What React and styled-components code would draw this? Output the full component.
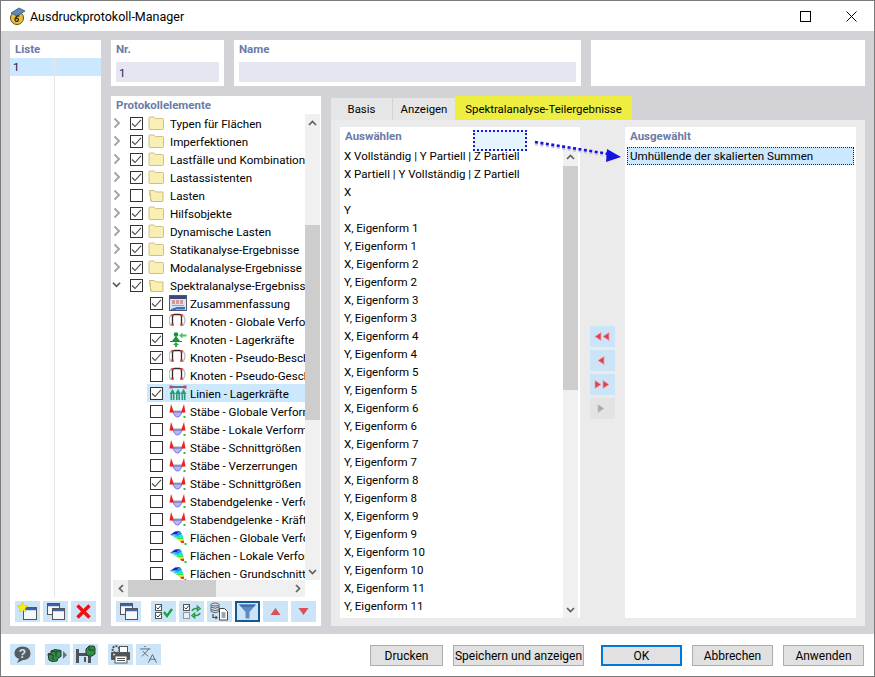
import React from "react";
import styled, { createGlobalStyle } from "styled-components";
import { Languages } from "lucide-react";

const Global = createGlobalStyle`
  html, body { margin: 0; padding: 0; background: #fff; }
  body { font-family: "Roboto", "Noto Sans", sans-serif; font-size: 11.6px; color: #000; }
  * { box-sizing: border-box; }
`;

const Window = styled.div`
  position: relative;
  width: 875px;
  height: 677px;
  border: 1px solid #7a7a7a;
  background: #fff;
  display: flex;
  flex-direction: column;
  overflow: hidden;
`;
const TitleBar = styled.div`
  height: 30px;
  display: flex;
  align-items: center;
  padding: 0 0 0 8px;
  flex: none;
`;
const TitleText = styled.div`
  flex: 1;
  margin-left: 4px;
  font-size: 12.5px;
`;
const WinBtn = styled.div`
  width: 46px;
  height: 30px;
  display: flex;
  align-items: center;
  justify-content: center;
`;
const Main = styled.div`
  flex: 1;
  min-height: 0;
  background: #d2d2d7;
  padding: 9px 9px 8px 9px;
  display: flex;
  gap: 10px;
`;
const Panel = styled.div`
  background: #fff;
  display: flex;
  flex-direction: column;
`;
const ListPanel = styled(Panel)`
  width: 91px;
  flex: none;
`;
const Heading = styled.div`
  height: ${p => p.$h || 18}px;
  line-height: 18px;
  padding-left: ${p => p.$pad ?? 5}px;
  color: #6b7ba6;
  font-weight: 700;
  font-size: 11.5px;
  flex: none;
`;
const ListColumns = styled.div`
  flex: 1;
  display: flex;
  min-height: 0;
`;
const ListColumn = styled.div`
  width: ${p => p.$w}px;
  border-right: ${p => (p.$rule ? "1px solid #e6e6e6" : "none")};
  flex: ${p => (p.$rule ? "none" : "1")};
`;
const ListCell = styled.div`
  height: 18px;
  line-height: 18px;
  background: #cce8ff;
  padding-left: 3px;
  color: #1d0f4a;
`;
const ToolRow = styled.div`
  height: 29px;
  flex: none;
  padding: 4px 5px;
  display: flex;
  gap: ${p => p.$gap ?? 3}px;
`;
const ToolGroup = styled.div`
  display: flex;
  gap: 3px;
`;
const ToolBtn = styled.div`
  width: 25px;
  height: 21px;
  flex: none;
  background: ${p => (p.$off ? "#e3e3e3" : "#cce4f7")};
  border: ${p => (p.$active ? "2px solid #15598f" : "none")};
  display: flex;
  align-items: center;
  justify-content: center;
`;
const RightCol = styled.div`
  flex: 1;
  min-width: 0;
  display: flex;
  flex-direction: column;
  gap: 10px;
`;
const TopRow = styled.div`
  display: flex;
  gap: 10px;
  height: 46px;
  flex: none;
`;
const FieldPanel = styled(Panel)`
  width: ${p => p.$w}px;
  flex: ${p => (p.$w ? "none" : "1")};
`;
const FieldHeading = styled(Heading)`
  height: 22px;
`;
const FieldInput = styled.div`
  height: 20px;
  margin: 0 5px;
  background: #e6e6f0;
  color: #2a1a5e;
  line-height: 22px;
  padding-left: 3px;
`;
const BottomRow = styled.div`
  flex: 1;
  min-height: 0;
  display: flex;
  gap: 10px;
`;
const TreePanel = styled(Panel)`
  width: 210px;
  flex: none;
`;
const TreeBody = styled.div`
  flex: 1;
  min-height: 0;
  display: flex;
  padding-right: 1px;
`;
const TreeView = styled.div`
  flex: 1;
  min-width: 0;
  overflow: hidden;
`;
const TreeRow = styled.div`
  height: 18px;
  display: flex;
  align-items: center;
  white-space: nowrap;
  padding-left: ${p => (p.$child ? 39 : 2)}px;
`;
const TreeLabel = styled.span`
  line-height: 16px;
  padding-top: 2px;
`;
const Chevron = styled.div`
  width: 8px;
  margin-right: 9px;
  display: flex;
  flex: none;
`;
const Selectable = styled.div`
  display: flex;
  align-items: center;
  height: 18px;
  flex: 1;
  background: ${p => (p.$sel ? "#cce8ff" : "transparent")};
  padding-left: 3px;
  margin-left: -3px;
  overflow: hidden;
`;
const Check = styled.div`
  width: 13px;
  height: 13px;
  border: 1px solid #333;
  background: #fff;
  flex: none;
  display: flex;
  align-items: center;
  justify-content: center;
`;
const TreeIcon = styled.div`
  width: 18px;
  height: 16px;
  margin: 0 3px 0 6px;
  flex: none;
  display: flex;
`;
const FolderIcon = styled(TreeIcon)`
  width: 17px;
  margin: 0 5px 0 5px;
`;
const VScroll = styled.div`
  width: 15px;
  flex: none;
  background: #f0f0f0;
  display: flex;
  flex-direction: column;
`;
const ScrollArrow = styled.div`
  width: ${p => p.$w || 15}px;
  height: ${p => p.$h || 17}px;
  flex: none;
  display: flex;
  align-items: center;
  justify-content: center;
`;
const VThumb = styled.div`
  height: ${p => p.$h}px;
  margin-top: ${p => p.$t}px;
  background: #cdcdcd;
  flex: none;
`;
const Spacer = styled.div`
  flex: 1;
`;
const HScroll = styled.div`
  height: 17px;
  width: 192px;
  margin-left: 2px;
  flex: none;
  background: #f0f0f0;
  display: flex;
`;
const HThumb = styled.div`
  width: 88px;
  background: #cdcdcd;
  flex: none;
`;
const TabArea = styled.div`
  flex: 1;
  min-width: 0;
  display: flex;
  flex-direction: column;
`;
const Tabs = styled.div`
  display: flex;
  align-items: flex-end;
  height: 24px;
  flex: none;
`;
const Tab = styled.div`
  width: ${p => p.$w}px;
  margin-right: ${p => p.$mr || 0}px;
  height: ${p => (p.$on ? 24 : 22)}px;
  background: ${p => (p.$on ? "#eeee40" : "#e6e6e6")};
  text-align: center;
  font-size: 11.4px;
  line-height: 22px;
  padding-top: ${p => (p.$on ? 2 : 0)}px;
  white-space: nowrap;
`;
const TabBody = styled.div`
  flex: 1;
  min-height: 0;
  background: #ebebeb;
  padding: 7px 9px 8px 9px;
  display: flex;
`;
const PickPanel = styled(Panel)`
  width: ${p => p.$w}px;
  flex: none;
`;
const PickBody = styled.div`
  flex: 1;
  min-height: 0;
  display: flex;
  padding-right: 2px;
`;
const PickList = styled.div`
  flex: 1;
  min-width: 0;
  overflow: hidden;
`;
const PickRow = styled.div`
  height: 18px;
  line-height: 18px;
  padding-left: 4px;
  font-size: 11.5px;
  white-space: nowrap;
`;
const PickedRow = styled.div`
  height: 18px;
  line-height: 16px;
  margin: 0 2px;
  padding-left: 2px;
  background: #cce8ff;
  border: 1px dotted #222;
  white-space: nowrap;
`;
const MoveCol = styled.div`
  width: 45px;
  flex: none;
  padding-left: 10px;
  display: flex;
  flex-direction: column;
  justify-content: center;
  gap: 3px;
`;
const Footer = styled.div`
  height: 42px;
  flex: none;
  display: flex;
  align-items: flex-start;
  padding: 10px 10px 0 9px;
`;
const FooterGroup = styled.div`
  display: flex;
  gap: 3px;
  margin-right: 10px;
`;
const DlgBtn = styled.div`
  width: ${p => p.$w}px;
  height: 21px;
  margin-top: 1px;
  margin-left: ${p => p.$ml || 0}px;
  background: #e1e1e1;
  border: ${p => (p.$def ? "2px solid #0078d7" : "1px solid #adadad")};
  display: flex;
  align-items: center;
  justify-content: center;
  font-size: 12px;
  white-space: nowrap;
  flex: none;
`;
const DragBox = styled.div`
  position: absolute;
  left: 472px;
  top: 129px;
  width: 54px;
  height: 21px;
  background: #e5f3ff;
  border: 2px dotted #1c1ce0;
`;
const DragArrow = styled.svg`
  position: absolute;
  left: 530px;
  top: 134px;
  overflow: visible;
`;

const Svg = ({ w = 18, h = 16, children }) => (
  <svg width={w} height={h} viewBox={`0 0 ${w} ${h}`} style={{ display: "block" }}>{children}</svg>
);

const Tick = () => (
  <svg width="11" height="11" viewBox="0 0 11 11"><path d="M1 5.5 L4 8.5 L10 1.8" fill="none" stroke="#4a4a4a" strokeWidth="1.1" /></svg>
);
const ChevR = () => (
  <svg width="8" height="12" viewBox="0 0 8 12"><path d="M1.5 1.5 L6 6 L1.5 10.5" fill="none" stroke="#a6a6a6" strokeWidth="2" /></svg>
);
const ChevD = () => (
  <svg width="10" height="8" viewBox="0 0 10 8" style={{ marginLeft: -1 }}><path d="M1 1.5 L5 5.5 L9 1.5" fill="none" stroke="#555" strokeWidth="1.8" /></svg>
);
const SUp = () => (
  <svg width="9" height="6" viewBox="0 0 9 6"><path d="M1 5 L4.5 1.5 L8 5" fill="none" stroke="#606060" strokeWidth="1.7" /></svg>
);
const SDown = () => (
  <svg width="9" height="6" viewBox="0 0 9 6"><path d="M1 1 L4.5 4.5 L8 1" fill="none" stroke="#606060" strokeWidth="1.7" /></svg>
);
const SLeft = () => (
  <svg width="6" height="9" viewBox="0 0 6 9"><path d="M5 1 L1.5 4.5 L5 8" fill="none" stroke="#606060" strokeWidth="1.7" /></svg>
);
const SRight = () => (
  <svg width="6" height="9" viewBox="0 0 6 9"><path d="M1 1 L4.5 4.5 L1 8" fill="none" stroke="#606060" strokeWidth="1.7" /></svg>
);

const Folder = ({ open }) => (
  <Svg w={17} h={16}>
    {open ? (
      <path d="M1.5 3.5 h5 l1.5 1.5 h7 v9 q0 .5 -.5 .5 h-11 q-.5 0 -.5 -.5 z M1.5 3.5 l1.5 11" fill="#faefb2" stroke="#c9bd80" />
    ) : (
      <path d="M1 3 q0 -1 1 -1 h4 l1.5 1.5 h7 q1 0 1 1 v9 q0 1 -1 1 h-12.5 q-1 0 -1 -1 z" fill="#faefb2" stroke="#cdc184" />
    )}
  </Svg>
);
const SummaryIcon = () => (
  <Svg>
    <rect x="0.5" y="0.5" width="17" height="15" fill="#dfe3ee" stroke="#4f5a72" />
    <rect x="1" y="1" width="16" height="3" fill="#3a4a78" />
    <path d="M3 6 h12 M3 8 h12" stroke="#c85050" strokeWidth="1" strokeDasharray="3 1" />
    <path d="M3 10.5 h12" stroke="#8aa0c8" />
    <path d="M2 14 L8 12 h8 v2.5 h-14z" fill="#3a6fc0" />
    <path d="M2 14.5 h5" stroke="#d04040" />
  </Svg>
);
const NodeIcon = () => (
  <Svg>
    <path d="M2 2 A8 8 0 0 0 2 12.5 M14 2 A8 8 0 0 1 14 12.5" fill="none" stroke="#bdbdbd" strokeWidth="1.4" />
    <path d="M3.5 12 V3.5 Q3.5 1.5 5.5 1.5 H10.5 Q12.5 1.5 12.5 3.5 V12" fill="none" stroke="#2c2c2c" strokeWidth="1.3" />
    <rect x="2.3" y="1" width="2.4" height="2.4" fill="#d83a3a" />
    <rect x="11.3" y="1" width="2.4" height="2.4" fill="#d83a3a" />
    <rect x="2.3" y="10.5" width="2.4" height="2.4" fill="#d83a3a" />
    <rect x="11.3" y="10.5" width="2.4" height="2.4" fill="#d83a3a" />
  </Svg>
);
const SupportIcon = () => (
  <Svg>
    <circle cx="7" cy="3.5" r="2.3" fill="#1f8f3a" />
    <path d="M3 10 L7 5 L11 10 Z" fill="#1f8f3a" />
    <path d="M1 10.5 h12" stroke="#4a6a4a" />
    <path d="M17.5 3.5 h-4 v-2 l-3.5 3 l3.5 3 v-2 h4z" fill="#4ec46a" />
    <path d="M7 11 l-3 3 h2 v2 h2 v-2 h2 z" fill="#2ca84c" />
  </Svg>
);
const LineIcon = () => (
  <Svg>
    <path d="M2 2 h14" stroke="#2a4a5a" strokeWidth="1.4" />
    <rect x="0.5" y="0.5" width="3" height="3" fill="#d04060" />
    <rect x="14.5" y="0.5" width="3" height="3" fill="#d04060" />
    <g fill="#2f9a7a">
      <path d="M3.5 4 l3 5 h-6z M9 4 l3 5 h-6z M14.5 4 l3 5 h-6z" />
      <rect x="1.5" y="9" width="4" height="6" />
      <rect x="7" y="9" width="4" height="6" />
      <rect x="12.5" y="9" width="4" height="6" />
    </g>
    <path d="M3.5 9 v6 M9 9 v6 M14.5 9 v6" stroke="#cfeee6" strokeWidth="0.8" />
  </Svg>
);
const MemberIcon = () => (
  <Svg>
    <path d="M4 9 C5 12 6.5 14 8.5 14 C10.5 14 12 12 13 9 Z" fill="#b4b6f6" stroke="#5a5ae0" strokeWidth="0.8" />
    <path d="M2 8.5 h13" stroke="#8f8f9a" strokeWidth="1.8" />
    <path d="M0.5 9.5 L2 1 L4.5 8 L4 9.5Z" fill="#f02020" />
    <path d="M16.5 9.5 L15 1 L12.5 8 L13 9.5Z" fill="#f02020" />
    <rect x="14.5" y="13" width="2" height="2" fill="#22c43a" />
  </Svg>
);
const SurfaceIcon = () => (
  <Svg>
    <path d="M1 6 L6 2.5 L11 2 L8 5Z" fill="#2020b0" />
    <path d="M1 6 L8 5 L11 2 L13 5 L9 7Z" fill="#1890ff" />
    <path d="M1 6.2 L9 7 L13 5 L14 8 L9 9Z" fill="#18e0d0" />
    <path d="M4 8 L9 9 L14 8 L14.5 10 L10 10.5Z" fill="#40e040" />
    <path d="M8 10.2 L14.5 10 L15 11.5 L11 12Z" fill="#f0e810" />
    <path d="M11 12 L15 11.5 L15 14 L12.5 14Z" fill="#f03810" />
    <rect x="15.5" y="14" width="2" height="2" fill="#22c43a" />
  </Svg>
);
const icons = { sum: SummaryIcon, node: NodeIcon, sup: SupportIcon, line: LineIcon, mem: MemberIcon, surf: SurfaceIcon };

const AppIcon = () => (
  <Svg w={17} h={18}>
    <circle cx="8" cy="11" r="6.5" fill="#e8c23a" stroke="#5a4a1a" />
    <path d="M2 6 L10 1 L16 4 L8 9Z" fill="#5f87b8" stroke="#33557f" strokeWidth="0.8" />
    <path d="M10.5 9 C8 8.6 6 10 6 12.5 C6 15 9.5 15 9.5 12.6 C9.5 11 7.5 11 6.5 11.8" fill="none" stroke="#3a2c08" strokeWidth="1.3" />
  </Svg>
);

const WinGlyph = ({ x, y, w = 12, h = 11 }) => (
  <g>
    <rect x={x + .5} y={y + .5} width={w} height={h} fill="#f4f6fa" stroke="#555" />
    <rect x={x + 1} y={y + 1} width={w - 1} height="2.2" fill="#3a62a8" />
  </g>
);
const NewIcon = () => (
  <Svg w={21} h={19}>
    <WinGlyph x={6} y={5} w={13} h={12} />
    <path d="M5.5 0 L7 3.6 L11 3.8 L8 6.4 L9 10 L5.5 8 L2 10 L3 6.4 L0 3.8 L4 3.6Z" fill="#f6ee10" stroke="#c8b820" strokeWidth="0.4" />
  </Svg>
);
const CopyIcon = () => (
  <Svg w={21} h={19}>
    <WinGlyph x={2} y={1} w={12} h={11} />
    <WinGlyph x={7} y={6} w={12} h={11} />
  </Svg>
);
const DeleteIcon = () => (
  <Svg w={17} h={17}>
    <path d="M2.5 2.5 L14.5 14.5 M14.5 2.5 L2.5 14.5" stroke="#ee1111" strokeWidth="3.4" />
  </Svg>
);
const CheckAllIcon = () => (
  <Svg w={21} h={17}>
    <rect x="2.5" y="1.5" width="6" height="6" fill="#fff" stroke="#555" />
    <path d="M3.5 4.5 l1.5 1.5 l3 -3.5" fill="none" stroke="#333" />
    <rect x="2.5" y="9.5" width="6" height="6" fill="#fff" stroke="#555" />
    <path d="M3.5 12.5 l1.5 1.5 l3 -3.5" fill="none" stroke="#333" />
    <path d="M11 9 l3 4 l5 -7" fill="none" stroke="#14a845" strokeWidth="2.4" />
  </Svg>
);
const SwapIcon = () => (
  <Svg w={21} h={17}>
    <rect x="2.5" y="1.5" width="6" height="6" fill="#fff" stroke="#555" />
    <path d="M3.5 4.5 l1.5 1.5 l3 -3.5" fill="none" stroke="#333" />
    <rect x="2.5" y="9.5" width="6" height="6" fill="#e4eef6" stroke="#999" />
    <path d="M11 8 Q12 5.5 15 5.5 h2 M19 5.5 l-2.5 -2 v4z" fill="none" stroke="#2a9a50" strokeWidth="1.6" />
    <path d="M19 10 Q18 12.5 15 12.5 h-2 M11 12.5 l2.5 -2 v4z" fill="none" stroke="#2a9a50" strokeWidth="1.6" />
  </Svg>
);
const StackIcon = () => (
  <Svg w={21} h={19}>
    <ellipse cx="6" cy="2.5" rx="4" ry="1.5" fill="#dde" stroke="#666" />
    <path d="M2 2.5 v7 q4 2.5 8 0 v-7 M2 5 q4 2.5 8 0 M2 7.5 q4 2.5 8 0" fill="none" stroke="#666" />
    <path d="M4 12 v3.5 h3" fill="none" stroke="#444" strokeWidth="1.2" />
    <path d="M6.5 13.5 l2.5 2 l-2.5 2z" fill="#444" />
    <path d="M10.5 6.5 h5 l3 3 v8.5 h-8z" fill="#fff" stroke="#444" />
    <path d="M12.5 11 h4 M12.5 13 h4 M12.5 15 h4" stroke="#444" />
  </Svg>
);
const FilterIcon = () => (
  <Svg w={19} h={17}>
    <path d="M1 1.5 H18 L11.5 9 V15.5 H7.5 V9Z" fill="#5f8bc4" />
    <path d="M1 1.5 H18 L15.5 4 H3.5Z" fill="#3f6fac" />
  </Svg>
);
const TriUp = () => (
  <Svg w={11} h={9}><path d="M5.5 1 L10.5 8 H.5Z" fill="#d8505a" /></Svg>
);
const TriDown = () => (
  <Svg w={11} h={9}><path d="M5.5 8 L10.5 1 H.5Z" fill="#d8505a" /></Svg>
);
const MoveTri = ({ dir, n = 1, off }) => (
  <Svg w={17} h={11}>
    {[...Array(n)].map((_, i) => {
      const x = n === 1 ? 4 : i === 0 ? 1 : 9;
      const d = dir === "l" ? `M${x} 5.5 L${x + 6} 1.5 V9.5Z` : `M${x + 6} 5.5 L${x} 1.5 V9.5Z`;
      return <path key={i} d={d} fill={off ? "#a9a9a9" : "#e0404c"} stroke={off ? "#c4c4c4" : "#f0a0a6"} strokeWidth="0.8" />;
    })}
  </Svg>
);
const HelpIcon = () => (
  <Svg w={19} h={19}>
    <path d="M9.5 1.5 C14.5 1.5 17.5 4.5 17.5 8.5 C17.5 12.5 14.5 15 10 15 L4 18 L6 13.8 C3 12.8 1.5 11 1.5 8.5 C1.5 4.5 4.5 1.5 9.5 1.5Z" fill="#555b60" />
    <text x="9.5" y="13" textAnchor="middle" fontFamily="Liberation Sans" fontWeight="700" fontSize="12" fill="#cce4f7">?</text>
  </Svg>
);
const ModelIcon = () => (
  <Svg w={21} h={18}>
    <path d="M1 8 l3 -1 v-2 l4 -1.5 l6 1 v6 l-3 1.5 l-1 3 l-5 .5 l-3 -1.5z" fill="#2f8f4a" stroke="#263a2c" />
    <path d="M4 5 l5 1 l5 -1.5 M9 6 v5 M1 8 l5 1 v5" fill="none" stroke="#263a2c" />
    <path d="M16 5 L20 9 L16 13Z" fill="#707070" />
  </Svg>
);
const SaveModelIcon = () => (
  <Svg w={21} h={19}>
    <path d="M1 4 H13 L16 7 V18 H1Z" fill="#4f5358" />
    <rect x="4" y="4" width="7" height="4" fill="#cce4f7" />
    <rect x="4" y="11" width="9" height="7" fill="#cce4f7" />
    <rect x="9" y="12" width="2" height="5" fill="#4f5358" />
    <path d="M11 4 l3 -3 h5 l1 2 v6 l-3 2 h-4 l-2 -2z" fill="#2f8f4a" stroke="#263a2c" />
    <path d="M14 1 v4 h5" fill="none" stroke="#263a2c" />
  </Svg>
);
const PrintIcon = () => (
  <Svg w={21} h={19}>
    <circle cx="6" cy="4.5" r="3.4" fill="none" stroke="#555" strokeWidth="2" strokeDasharray="2 1" />
    <rect x="9.5" y="1.5" width="8" height="6" fill="#fff" stroke="#555" />
    <rect x="1" y="7" width="19" height="8" rx="1" fill="#555" />
    <rect x="5" y="11" width="12" height="7" fill="#fff" stroke="#555" />
    <path d="M7 13.5 h8 M7 15.5 h8" stroke="#555" />
    <circle cx="4" cy="9.5" r="1" fill="#cce4f7" />
  </Svg>
);

const treeItems = [
  { t: "Typen für Flächen", c: 1 },
  { t: "Imperfektionen", c: 1 },
  { t: "Lastfälle und Kombinationen", c: 1 },
  { t: "Lastassistenten", c: 1 },
  { t: "Lasten", c: 0, open: 1 },
  { t: "Hilfsobjekte", c: 1 },
  { t: "Dynamische Lasten", c: 1 },
  { t: "Statikanalyse-Ergebnisse", c: 1 },
  { t: "Modalanalyse-Ergebnisse", c: 1 },
  { t: "Spektralanalyse-Ergebnisse", c: 1, open: 1, exp: 1 },
];
const childItems = [
  { t: "Zusammenfassung", c: 1, i: "sum" },
  { t: "Knoten - Globale Verformungen", c: 0, i: "node" },
  { t: "Knoten - Lagerkräfte", c: 1, i: "sup" },
  { t: "Knoten - Pseudo-Beschleunigungen", c: 1, i: "node" },
  { t: "Knoten - Pseudo-Geschwindigkeiten", c: 0, i: "node" },
  { t: "Linien - Lagerkräfte", c: 1, i: "line", sel: 1 },
  { t: "Stäbe - Globale Verformungen", c: 0, i: "mem" },
  { t: "Stäbe - Lokale Verformungen", c: 0, i: "mem" },
  { t: "Stäbe - Schnittgrößen", c: 0, i: "mem" },
  { t: "Stäbe - Verzerrungen", c: 0, i: "mem" },
  { t: "Stäbe - Schnittgrößen", c: 1, i: "mem" },
  { t: "Stabendgelenke - Verformungen", c: 0, i: "mem" },
  { t: "Stabendgelenke - Kräfte", c: 0, i: "mem" },
  { t: "Flächen - Globale Verformungen", c: 0, i: "surf" },
  { t: "Flächen - Lokale Verformungen", c: 0, i: "surf" },
  { t: "Flächen - Grundschnittgrößen", c: 0, i: "surf" },
];
const pickItems = ["X Vollständig | Y Partiell | Z Partiell", "X Partiell | Y Vollständig | Z Partiell", "X", "Y"];
for (let n = 1; n <= 11; n++) pickItems.push(`X, Eigenform ${n}`, `Y, Eigenform ${n}`);

export default function App() {
  return (
    <>
      <Global />
      <Window>
        <TitleBar>
          <AppIcon />
          <TitleText>Ausdruckprotokoll-Manager</TitleText>
          <WinBtn>
            <svg width="11" height="11" viewBox="0 0 11 11"><rect x=".5" y=".5" width="10" height="10" fill="none" stroke="#000" /></svg>
          </WinBtn>
          <WinBtn>
            <svg width="11" height="11" viewBox="0 0 11 11"><path d="M.5 .5 L10.5 10.5 M10.5 .5 L.5 10.5" stroke="#000" /></svg>
          </WinBtn>
        </TitleBar>
        <Main>
          <ListPanel>
            <Heading>Liste</Heading>
            <ListColumns>
              <ListColumn $w={45} $rule><ListCell>1</ListCell></ListColumn>
              <ListColumn><ListCell /></ListColumn>
            </ListColumns>
            <ToolRow>
              <ToolBtn><NewIcon /></ToolBtn>
              <ToolBtn><CopyIcon /></ToolBtn>
              <ToolBtn><DeleteIcon /></ToolBtn>
            </ToolRow>
          </ListPanel>
          <RightCol>
            <TopRow>
              <FieldPanel $w={113}>
                <FieldHeading>Nr.</FieldHeading>
                <FieldInput>1</FieldInput>
              </FieldPanel>
              <FieldPanel $w={347}>
                <FieldHeading>Name</FieldHeading>
                <FieldInput />
              </FieldPanel>
              <FieldPanel />
            </TopRow>
            <BottomRow>
              <TreePanel>
                <Heading $h={18}>Protokollelemente</Heading>
                <TreeBody>
                  <TreeView>
                    {treeItems.map(it => (
                      <TreeRow key={it.t}>
                        <Chevron>{it.exp ? <ChevD /> : <ChevR />}</Chevron>
                        <Check>{it.c ? <Tick /> : null}</Check>
                        <FolderIcon><Folder open={it.open} /></FolderIcon>
                        <TreeLabel>{it.t}</TreeLabel>
                      </TreeRow>
                    ))}
                    {childItems.map((it, i) => {
                      const Icon = icons[it.i];
                      return (
                        <TreeRow key={i} $child>
                          <Selectable $sel={it.sel}>
                            <Check>{it.c ? <Tick /> : null}</Check>
                            <TreeIcon><Icon /></TreeIcon>
                            <TreeLabel>{it.t}</TreeLabel>
                          </Selectable>
                        </TreeRow>
                      );
                    })}
                  </TreeView>
                  <VScroll>
                    <ScrollArrow><SUp /></ScrollArrow>
                    <VThumb $t={94} $h={195} />
                    <Spacer />
                    <ScrollArrow><SDown /></ScrollArrow>
                  </VScroll>
                </TreeBody>
                <HScroll>
                  <ScrollArrow><SLeft /></ScrollArrow>
                  <HThumb />
                  <Spacer />
                  <ScrollArrow><SRight /></ScrollArrow>
                </HScroll>
                <ToolRow $gap={10}>
                  <ToolBtn><CopyIcon /></ToolBtn>
                  <ToolGroup>
                    <ToolBtn><CheckAllIcon /></ToolBtn>
                    <ToolBtn><SwapIcon /></ToolBtn>
                    <ToolBtn><StackIcon /></ToolBtn>
                    <ToolBtn $active><FilterIcon /></ToolBtn>
                    <ToolBtn><TriUp /></ToolBtn>
                    <ToolBtn><TriDown /></ToolBtn>
                  </ToolGroup>
                </ToolRow>
              </TreePanel>
              <TabArea>
                <Tabs>
                  <Tab $w={61} $mr={1}>Basis</Tab>
                  <Tab $w={62}>Anzeigen</Tab>
                  <Tab $w={177} $on>Spektralanalyse-Teilergebnisse</Tab>
                </Tabs>
                <TabBody>
                  <PickPanel $w={240}>
                    <Heading $h={20}>Auswählen</Heading>
                    <PickBody>
                      <PickList>
                        {pickItems.map(p => <PickRow key={p}>{p}</PickRow>)}
                      </PickList>
                      <VScroll>
                        <ScrollArrow $h={19}><SUp /></ScrollArrow>
                        <VThumb $t={0} $h={224} />
                        <Spacer />
                        <ScrollArrow><SDown /></ScrollArrow>
                      </VScroll>
                    </PickBody>
                  </PickPanel>
                  <MoveCol>
                    <ToolBtn><MoveTri dir="l" n={2} /></ToolBtn>
                    <ToolBtn><MoveTri dir="l" /></ToolBtn>
                    <ToolBtn><MoveTri dir="r" n={2} /></ToolBtn>
                    <ToolBtn $off><MoveTri dir="r" off /></ToolBtn>
                  </MoveCol>
                  <PickPanel $w={231}>
                    <Heading $h={20}>Ausgewählt</Heading>
                    <PickedRow>Umhüllende der skalierten Summen</PickedRow>
                  </PickPanel>
                </TabBody>
              </TabArea>
            </BottomRow>
          </RightCol>
        </Main>
        <Footer>
          <FooterGroup><ToolBtn><HelpIcon /></ToolBtn></FooterGroup>
          <FooterGroup>
            <ToolBtn><ModelIcon /></ToolBtn>
            <ToolBtn><SaveModelIcon /></ToolBtn>
          </FooterGroup>
          <FooterGroup>
            <ToolBtn><PrintIcon /></ToolBtn>
            <ToolBtn><Languages size={19} color="#666" strokeWidth={1.2} /></ToolBtn>
          </FooterGroup>
          <Spacer />
          <DlgBtn $w={73}>Drucken</DlgBtn>
          <DlgBtn $w={131} $ml={10}>Speichern und anzeigen</DlgBtn>
          <DlgBtn $w={81} $ml={17} $def>OK</DlgBtn>
          <DlgBtn $w={81} $ml={10}>Abbrechen</DlgBtn>
          <DlgBtn $w={81} $ml={10}>Anwenden</DlgBtn>
        </Footer>
        <DragBox />
        <DragArrow width="92" height="28" viewBox="0 0 92 28">
          <path d="M4 7 L78 19" stroke="#c8c8d8" strokeWidth="2.6" strokeDasharray="3 2.5" transform="translate(0 2)" />
          <path d="M4 7 L78 19" stroke="#1414e0" strokeWidth="2.6" strokeDasharray="3 2.5" />
          <path d="M90 22 L76 14 L75 27Z" fill="#1414e0" />
        </DragArrow>
      </Window>
    </>
  );
}
